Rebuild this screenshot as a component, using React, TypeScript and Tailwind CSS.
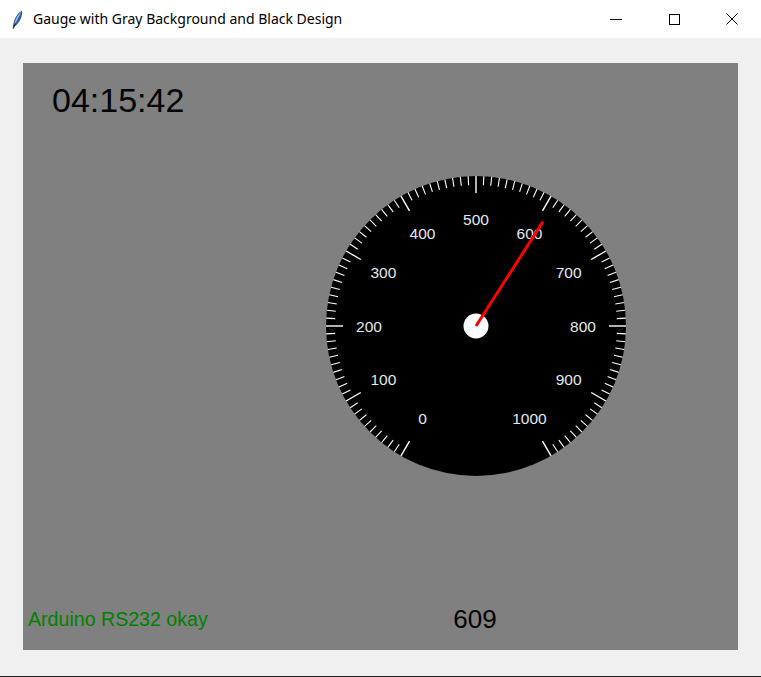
import React from 'react'

const CX = 151
const CY = 151
const R = 150
const VALUE = 609

function pt(deg: number, r: number) {
  const a = (deg * Math.PI) / 180
  return { x: CX + Math.sin(a) * r, y: CY - Math.cos(a) * r }
}

function Gauge() {
  const ticks = Array.from({ length: 101 }, (_, i) => i)
  const labels = Array.from({ length: 11 }, (_, i) => i * 100)
  const needleDeg = -150 + (VALUE / 1000) * 300
  const tip = pt(needleDeg, 124)
  return (
    <svg width={302} height={302} viewBox="0 0 302 302" className="block">
      <circle cx={CX} cy={CY} r={R} fill="#000" />
      {ticks.map(i => {
        const deg = -150 + i * 3
        const major = i % 10 === 0
        const a = pt(deg, R)
        const b = pt(deg, major ? R - 17 : R - 9)
        return <line key={i} x1={a.x} y1={a.y} x2={b.x} y2={b.y} stroke="#fff" strokeWidth={major ? 1.4 : 1.1} />
      })}
      {labels.map(v => {
        const deg = -150 + (v / 1000) * 300
        const p = pt(deg, 107)
        return (
          <text key={v} x={p.x} y={p.y + 5.5} textAnchor="middle" fill="#e4e8ee"
            style={{ fontFamily: '"Liberation Sans", Arial, sans-serif', fontSize: 15.5 }}>
            {v}
          </text>
        )
      })}
      <circle cx={CX} cy={CY} r={12.5} fill="#fff" />
      <line x1={CX} y1={CY} x2={tip.x} y2={tip.y} stroke="#ff0000" strokeWidth={3} />
    </svg>
  )
}

// tk default feather icon
function Feather() {
  return (
    <svg width="11" height="19" viewBox="0 0 11 19">
      <path d="M1 18.5 C1 12 3.5 4.5 10 0.5 C10.8 6 8 12.5 2.6 16.5 Z" fill="#2b5aa0" />
      <path d="M2.2 15 C3 10 5.5 5 9 2 C7.5 6 5 10.5 2.2 15 Z" fill="#a9c1e4" />
      <path d="M1 18.5 L3.5 13.5" stroke="#1d2a40" strokeWidth="1.2" />
    </svg>
  )
}

export default function App() {
  return (
    <div className="w-[761px] h-[677px] flex flex-col bg-[#f0f0f0] overflow-hidden">
      <div className="h-[38px] bg-white flex items-center shrink-0">
        <div className="w-[33px] flex justify-end pr-[10px] pt-[1px]"><Feather /></div>
        <span className="text-[14px] text-black pb-[1px]" style={{ fontFamily: '"Noto Sans", "Open Sans", sans-serif' }}>
          Gauge with Gray Background and Black Design
        </span>
        <div className="ml-auto flex h-full">
          <div className="w-[58px] h-full flex items-center justify-center">
            <div className="w-[12px] h-[1px] bg-black" />
          </div>
          <div className="w-[58px] h-full flex items-center justify-center">
            <div className="w-[11px] h-[11px] border border-black" />
          </div>
          <div className="w-[58px] h-full flex items-center justify-center">
            <svg width="12" height="12" viewBox="0 0 12 12">
              <path d="M0.5 0.5 L11.5 11.5 M11.5 0.5 L0.5 11.5" stroke="#000" strokeWidth="1" />
            </svg>
          </div>
        </div>
      </div>

      <div className="flex-1 pt-[25px] pl-[23px]">
        <div className="w-[715px] h-[587px] bg-[#808080] flex flex-col" style={{ fontFamily: '"Liberation Sans", Arial, sans-serif' }}>
          <div className="pt-[20px] pl-[29px] text-[34px] leading-[34px] text-black">04:15:42</div>
          <div className="mt-[58px] ml-[302px]">
            <Gauge />
          </div>
          <div className="flex-1" />
          <div className="flex items-center h-[30px] mb-[16px]">
            <div className="w-[427px] pl-[5px] text-[19.6px] leading-[30px] text-[#008000]">Arduino RS232 okay</div>
            <div className="w-[50px] text-center text-[26px] leading-[30px] text-black">609</div>
          </div>
        </div>
      </div>
      <div className="h-[1px] bg-[#1c1c1c] shrink-0" />
    </div>
  )
}
